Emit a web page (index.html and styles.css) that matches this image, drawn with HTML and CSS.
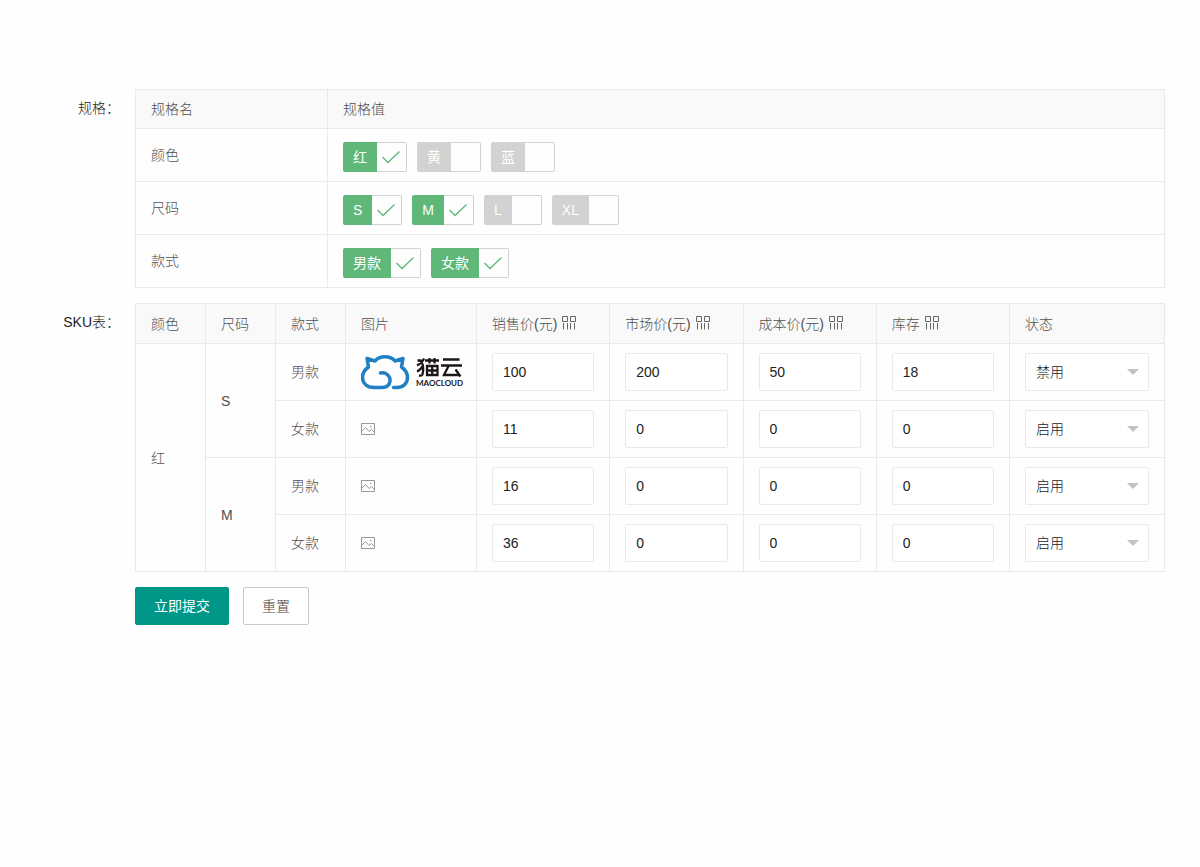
FILE: index.html
```html
<!DOCTYPE html>
<html lang="zh-CN">
<head>
<meta charset="utf-8">
<meta name="viewport" content="width=device-width, initial-scale=1">
<title>SKU</title>
<link rel="stylesheet" href="styles.css">
</head>
<body>
<svg class="defs" aria-hidden="true">
  <symbol id="tick" viewBox="0 0 18 14"><path d="M.5 7 6 12.500 17.500 1.500" fill="none" stroke="currentColor" stroke-width="1.300"/></symbol>
  <symbol id="batch" viewBox="0 0 14 14"><path d="M.5.5h5v5h-5zM8.500.5h5v5h-5zM1.500 7v6.500M5.500 7v6.500M8.500 7v6.500M12.500 7v6.500" fill="none" stroke="currentColor"/></symbol>
  <symbol id="picture" viewBox="0 0 14 12"><path d="M.5.5h13v11H.5zM.5 8.500 4.500 4.500l3.500 4L10.500 6.500l3 3M9 3.500h1.500" fill="none" stroke="currentColor"/></symbol>
</svg>
<form class="form">
  <div class="item">
    <div class="item-label">规格：</div>
    <div class="item-body">
      <table class="table spec">
        <colgroup><col class="col-name"><col></colgroup>
        <thead><tr><th>规格名</th><th>规格值</th></tr></thead>
        <tbody>
          <tr><td>颜色</td><td><div class="options">
            <label class="check"><input type="checkbox" checked><span class="check-text">红</span><span class="check-box"><svg><use href="#tick"/></svg></span></label>
            <label class="check"><input type="checkbox"><span class="check-text">黄</span><span class="check-box"><svg><use href="#tick"/></svg></span></label>
            <label class="check"><input type="checkbox"><span class="check-text">蓝</span><span class="check-box"><svg><use href="#tick"/></svg></span></label>
          </div></td></tr>
          <tr><td>尺码</td><td><div class="options">
            <label class="check"><input type="checkbox" checked><span class="check-text">S</span><span class="check-box"><svg><use href="#tick"/></svg></span></label>
            <label class="check"><input type="checkbox" checked><span class="check-text">M</span><span class="check-box"><svg><use href="#tick"/></svg></span></label>
            <label class="check"><input type="checkbox"><span class="check-text">L</span><span class="check-box"><svg><use href="#tick"/></svg></span></label>
            <label class="check"><input type="checkbox"><span class="check-text">XL</span><span class="check-box"><svg><use href="#tick"/></svg></span></label>
          </div></td></tr>
          <tr><td>款式</td><td><div class="options">
            <label class="check"><input type="checkbox" checked><span class="check-text">男款</span><span class="check-box"><svg><use href="#tick"/></svg></span></label>
            <label class="check"><input type="checkbox" checked><span class="check-text">女款</span><span class="check-box"><svg><use href="#tick"/></svg></span></label>
          </div></td></tr>
        </tbody>
      </table>
    </div>
  </div>
  <div class="item">
    <div class="item-label">SKU表：</div>
    <div class="item-body">
      <table class="table sku">
        <colgroup><col class="col-attr"><col class="col-attr"><col class="col-attr"><col class="col-image"><col><col><col><col><col class="col-status"></colgroup>
        <thead><tr>
          <th>颜色</th><th>尺码</th><th>款式</th><th>图片</th>
          <th><span class="head">销售价(元)<svg class="batch"><use href="#batch"/></svg></span></th>
          <th><span class="head">市场价(元)<svg class="batch"><use href="#batch"/></svg></span></th>
          <th><span class="head">成本价(元)<svg class="batch"><use href="#batch"/></svg></span></th>
          <th><span class="head">库存<svg class="batch"><use href="#batch"/></svg></span></th>
          <th>状态</th>
        </tr></thead>
        <tbody>
          <tr>
            <td rowspan="4">红</td><td rowspan="2">S</td><td>男款</td>
            <td><svg class="logo" viewBox="0 0 102 38" role="img" aria-label="猫云 MAOCLOUD">
              <path class="logo-cat" d="M19.500 20C25 19 29.500 23 29 28C28.500 32 26 34.500 21 34.500H13C6 34.500 1.500 30.500 1.500 24.500C1.500 20 4 16.500 7.500 14L6 5.500L14 8C18.500 2.200 29.500 2.200 34 8L42 5.500L40.500 14C44 16.500 46.500 20 46.500 24.500C46.500 30.500 42 34.500 36 34.500H32.500"/>
              <path class="logo-word" d="M56.500 7.500h4M63 5.500C61.500 9 59 11 56 12.500M59 7.500C63.500 11 62.500 17 61.500 21.500Q61 23 58 22.500M62 12.500C60.500 15.500 58.500 17.500 56 18.500M64 7.500h14M68.500 5v5.500M73.500 5v5.500M66 13h10.500v9H66zM66 17.500h10.500M71.200 13v9M82 6.500h16.500M80 12.500h21M87.500 13 83 22H98.500M94.500 16.500l5 7"/>
              <text class="logo-text" x="55" y="33">MAOCLOUD</text>
            </svg></td>
            <td><input class="field" type="text" aria-label="销售价" value="100"></td>
            <td><input class="field" type="text" aria-label="市场价" value="200"></td>
            <td><input class="field" type="text" aria-label="成本价" value="50"></td>
            <td><input class="field" type="text" aria-label="库存" value="18"></td>
            <td><div class="select"><select class="field" aria-label="状态"><option>启用</option><option selected>禁用</option></select></div></td>
          </tr>
          <tr>
            <td>女款</td><td><svg class="picture"><use href="#picture"/></svg></td>
            <td><input class="field" type="text" aria-label="销售价" value="11"></td>
            <td><input class="field" type="text" aria-label="市场价" value="0"></td>
            <td><input class="field" type="text" aria-label="成本价" value="0"></td>
            <td><input class="field" type="text" aria-label="库存" value="0"></td>
            <td><div class="select"><select class="field" aria-label="状态"><option selected>启用</option><option>禁用</option></select></div></td>
          </tr>
          <tr>
            <td rowspan="2">M</td><td>男款</td><td><svg class="picture"><use href="#picture"/></svg></td>
            <td><input class="field" type="text" aria-label="销售价" value="16"></td>
            <td><input class="field" type="text" aria-label="市场价" value="0"></td>
            <td><input class="field" type="text" aria-label="成本价" value="0"></td>
            <td><input class="field" type="text" aria-label="库存" value="0"></td>
            <td><div class="select"><select class="field" aria-label="状态"><option selected>启用</option><option>禁用</option></select></div></td>
          </tr>
          <tr>
            <td>女款</td><td><svg class="picture"><use href="#picture"/></svg></td>
            <td><input class="field" type="text" aria-label="销售价" value="36"></td>
            <td><input class="field" type="text" aria-label="市场价" value="0"></td>
            <td><input class="field" type="text" aria-label="成本价" value="0"></td>
            <td><input class="field" type="text" aria-label="库存" value="0"></td>
            <td><div class="select"><select class="field" aria-label="状态"><option selected>启用</option><option>禁用</option></select></div></td>
          </tr>
        </tbody>
      </table>
    </div>
  </div>
  <div class="actions">
    <button class="btn btn-primary" type="submit">立即提交</button>
    <button class="btn" type="reset">重置</button>
  </div>
</form>
</body>
</html>
```

FILE: styles.css
```css
* { box-sizing: border-box; }
body {
  margin: 0;
  background: #fefefe;
  color: #222;
  font: 300 14px/20px "Liberation Sans", "Noto Sans CJK SC", sans-serif;
}
input, select, button { font: inherit; }
.defs { position: absolute; width: 0; height: 0; }
.form { padding: 89px 35px 35px 25px; }
.item { display: flex; margin-bottom: 15px; }
.item-label {
  flex: none;
  width: 110px;
  padding: 9px 15px 9px 0;
  text-align: right;
  white-space: nowrap;
}
.item-body { flex: 1; min-width: 0; }

.table {
  width: 100%;
  table-layout: fixed;
  border-collapse: collapse;
  color: #505050;
}
.table th, .table td {
  padding: 9px 15px;
  border: 1px solid #e9e9e9;
  font-weight: 300;
  text-align: left;
  vertical-align: middle;
}
.table th { background: #f9f9f9; }
.table svg { display: block; }
.col-name { width: 192px; }
.col-attr { width: 70px; }
.col-image { width: 131px; }
.col-status { width: 155px; }
.sku th { height: 40px; }
.spec td { height: 53px; }
.sku td { height: 57px; }

.options { display: flex; flex-wrap: wrap; gap: 10px; padding-top: 4px; }
.check { display: flex; height: 30px; cursor: pointer; }
.check input { position: absolute; opacity: 0; }
.check-text {
  padding: 0 10px;
  border-radius: 2px 0 0 2px;
  background: #d2d2d2;
  color: #fff;
  font-weight: 400;
  line-height: 30px;
}
.check-box {
  display: grid;
  place-items: center;
  width: 30px;
  padding-right: 2px;
  border: 1px solid #d2d2d2;
  border-left: 0;
  border-radius: 0 2px 2px 0;
  color: #5fb878;
}
.check-box svg { width: 18px; height: 14px; visibility: hidden; }
.check input:checked ~ .check-text { background: #5fb878; }
.check input:checked ~ .check-box svg { visibility: visible; }

.head { display: flex; align-items: center; gap: 5px; white-space: nowrap; }
.batch { width: 14px; height: 14px; margin-bottom: 2px; color: #666; }
.picture { width: 14px; height: 12px; color: #999; }
.logo { width: 102px; height: 38px; }
.logo-cat { fill: none; stroke: #2180c3; stroke-width: 3.500; stroke-linecap: round; stroke-linejoin: round; }
.logo-word { fill: none; stroke: #1c1718; stroke-width: 2.300; }
.logo-text { fill: #1c1718; font: 700 8px "Lato", sans-serif; }

.field {
  display: block;
  width: 100%;
  height: 38px;
  padding: 0 10px;
  border: 1px solid #e9e9e9;
  border-radius: 2px;
  background: #fff;
  color: #222;
}
.select { position: relative; }
.select .field { appearance: none; color: #222; }
.select::after {
  content: "";
  position: absolute;
  top: 16px;
  right: 10px;
  border: 6px solid transparent;
  border-top-color: #c2c2c2;
  border-bottom-width: 0;
  pointer-events: none;
}

.actions { display: flex; gap: 14px; padding-left: 110px; }
.btn {
  height: 38px;
  padding: 0 18px;
  border: 1px solid #c9c9c9;
  border-radius: 2px;
  background: #fff;
  color: #444;
  cursor: pointer;
}
.btn-primary { border-color: #009688; background: #009688; color: #fff; font-weight: 400; }
```
